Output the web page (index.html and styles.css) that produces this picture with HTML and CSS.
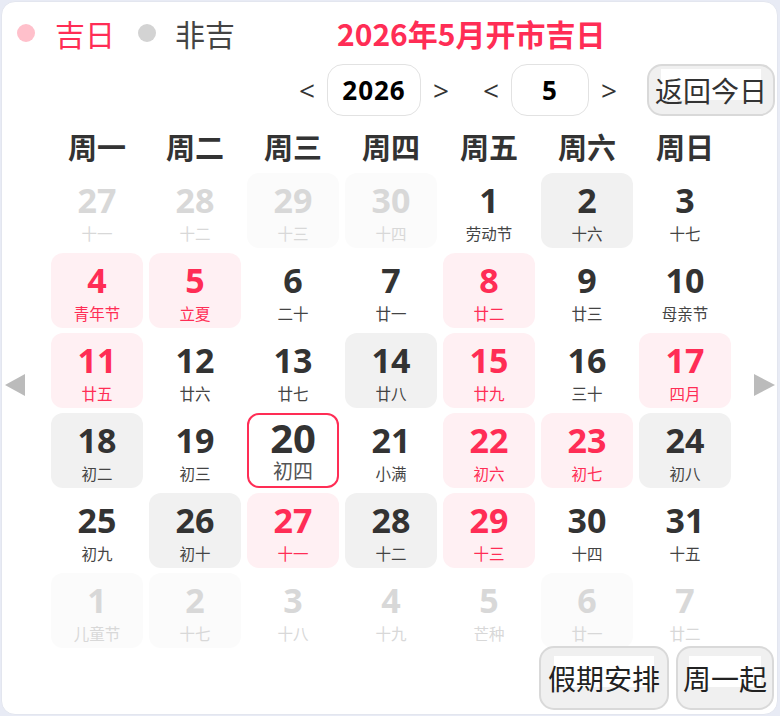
FILE: index.html
```html
<!DOCTYPE html>
<html lang="zh-CN">
<head>
<meta charset="utf-8">
<title>2026年5月开市吉日</title>
<link rel="stylesheet" href="styles.css">
</head>
<body>
<div class="card">
  <div class="top">
    <span class="dot dot-good"></span><span class="legend legend-good">吉日</span>
    <span class="dot dot-bad"></span><span class="legend legend-bad">非吉</span>
    <span class="title">2026年5月开市吉日</span>
  </div>
  <div class="controls">
    <span class="arr">&lt;</span>
    <span class="box box-year">2026</span>
    <span class="arr">&gt;</span>
    <span class="arr arr-gap">&lt;</span>
    <span class="box box-month">5</span>
    <span class="arr">&gt;</span>
    <button class="btn btn-today"><span class="hl">返回今日</span></button>
  </div>
  <div class="weekdays">
    <span>周一</span><span>周二</span><span>周三</span><span>周四</span><span>周五</span><span>周六</span><span>周日</span>
  </div>
  <div class="main">
    <div class="side side-left"><span class="tri tri-left"></span></div>
    <div class="grid">
      <div class="cell other"><b>27</b><i>十一</i></div>
      <div class="cell other"><b>28</b><i>十二</i></div>
      <div class="cell other faint"><b>29</b><i>十三</i></div>
      <div class="cell other faint"><b>30</b><i>十四</i></div>
      <div class="cell"><b>1</b><i>劳动节</i></div>
      <div class="cell bad"><b>2</b><i>十六</i></div>
      <div class="cell"><b>3</b><i>十七</i></div>

      <div class="cell good"><b>4</b><i>青年节</i></div>
      <div class="cell good"><b>5</b><i>立夏</i></div>
      <div class="cell"><b>6</b><i>二十</i></div>
      <div class="cell"><b>7</b><i>廿一</i></div>
      <div class="cell good"><b>8</b><i>廿二</i></div>
      <div class="cell"><b>9</b><i>廿三</i></div>
      <div class="cell"><b>10</b><i>母亲节</i></div>

      <div class="cell good"><b>11</b><i>廿五</i></div>
      <div class="cell"><b>12</b><i>廿六</i></div>
      <div class="cell"><b>13</b><i>廿七</i></div>
      <div class="cell bad"><b>14</b><i>廿八</i></div>
      <div class="cell good"><b>15</b><i>廿九</i></div>
      <div class="cell"><b>16</b><i>三十</i></div>
      <div class="cell good"><b>17</b><i>四月</i></div>

      <div class="cell bad"><b>18</b><i>初二</i></div>
      <div class="cell"><b>19</b><i>初三</i></div>
      <div class="cell today"><b>20</b><i>初四</i></div>
      <div class="cell"><b>21</b><i>小满</i></div>
      <div class="cell good"><b>22</b><i>初六</i></div>
      <div class="cell good"><b>23</b><i>初七</i></div>
      <div class="cell bad"><b>24</b><i>初八</i></div>

      <div class="cell"><b>25</b><i>初九</i></div>
      <div class="cell bad"><b>26</b><i>初十</i></div>
      <div class="cell good"><b>27</b><i>十一</i></div>
      <div class="cell bad"><b>28</b><i>十二</i></div>
      <div class="cell good"><b>29</b><i>十三</i></div>
      <div class="cell"><b>30</b><i>十四</i></div>
      <div class="cell"><b>31</b><i>十五</i></div>

      <div class="cell other faint"><b>1</b><i>儿童节</i></div>
      <div class="cell other faint"><b>2</b><i>十七</i></div>
      <div class="cell other"><b>3</b><i>十八</i></div>
      <div class="cell other"><b>4</b><i>十九</i></div>
      <div class="cell other"><b>5</b><i>芒种</i></div>
      <div class="cell other faint"><b>6</b><i>廿一</i></div>
      <div class="cell other"><b>7</b><i>廿二</i></div>
    </div>
    <div class="side side-right"><span class="tri tri-right"></span></div>
  </div>
  <div class="bottom">
    <button class="btn btn-holiday"><span class="hl">假期安排</span></button>
    <button class="btn btn-week"><span class="hl">周一起</span></button>
  </div>
</div>
</body>
</html>
```
FILE: styles.css
```css
* { box-sizing: border-box; }
html, body { margin: 0; padding: 0; }
body {
  background: #e8ebf5;
  width: 780px;
  height: 716px;
  overflow: hidden;
  font-family: "Noto Sans CJK SC", "Noto Sans", sans-serif;
}
.card {
  position: relative;
  margin: 1px;
  width: 777px;
  height: 714px;
  background: #fff;
  border: 1px solid #e3e6ef;
  border-radius: 14px;
  z-index: 0;
}
.top {
  display: flex;
  align-items: center;
  height: 62px;
  padding-left: 15px;
}
.dot {
  width: 18px;
  height: 18px;
  border-radius: 50%;
  display: inline-block;
}
.dot-good { background: #ffc0cb; margin-right: 20px; }
.dot-bad { background: #d3d3d3; margin-left: 23px; margin-right: 19px; }
.legend { font-size: 30px; line-height: 40px; }
.legend-good { color: #ff2d55; }
.legend-bad { color: #444; }
.title {
  margin-left: 102px;
  font-size: 30px;
  line-height: 40px;
  font-weight: 700;
  color: #ff2d55;
}
.controls {
  display: flex;
  align-items: center;
  justify-content: flex-end;
  height: 52px;
  padding-right: 2px;
}
.arr {
  width: 20px;
  text-align: center;
  font-family: "Open Sans", sans-serif;
  font-size: 28px;
  line-height: 36px;
  color: #333;
  margin: 0 10px;
}
.arr-gap { margin-left: 20px; }
.box {
  height: 52px;
  border: 1px solid #e2e2e2;
  border-radius: 16px;
  display: flex;
  align-items: center;
  justify-content: center;
  font-family: "Open Sans", sans-serif;
  font-weight: 700;
  font-size: 26px;
  color: #000;
  letter-spacing: 1px;
}
.box-year { width: 94px; }
.box-month { width: 78px; }
.btn {
  position: relative;
  z-index: 0;
  background: #f0f0f0;
  border: 2px solid #d9d9d9;
  border-radius: 15px;
  font-family: "Noto Sans CJK SC", sans-serif;
  font-size: 28px;
  color: #222;
  padding: 0;
  display: flex;
  align-items: center;
  justify-content: center;
}
.btn-today { width: 128px; height: 52px; margin-left: 18px; color: #333; }
.hl {
  position: relative;
  display: inline-block;
  line-height: 36px;
}
.hl::before {
  content: "";
  position: absolute;
  left: 6px;
  right: 6px;
  top: -3px;
  height: 31px;
  background: #fff;
  z-index: -1;
}
.weekdays {
  display: grid;
  grid-template-columns: repeat(7, 92px);
  column-gap: 6px;
  margin-left: 49px;
  height: 57px;
  padding-top: 12px;
}
.weekdays span {
  text-align: center;
  font-size: 29px;
  line-height: 36px;
  font-weight: 700;
  color: #333;
}
.main {
  display: flex;
}
.side { width: 49px; }
.side-right { width: 45px; padding-left: 23px; }
.side-left { padding-left: 3px; }
.tri {
  display: block;
  width: 0;
  height: 0;
  margin-top: 201px;
  border-top: 11.5px solid transparent;
  border-bottom: 11.5px solid transparent;
}
.tri-left { border-right: 20px solid #bbbbbb; }
.tri-right { border-left: 21px solid #bbbbbb; }
.grid {
  display: grid;
  grid-template-columns: repeat(7, 92px);
  grid-auto-rows: 75px;
  column-gap: 6px;
  row-gap: 5px;
}
.cell {
  border-radius: 12px;
  display: flex;
  flex-direction: column;
  align-items: center;
  padding-top: 10px;
}
.cell b {
  font-family: "Open Sans", sans-serif;
  font-weight: 700;
  font-size: 34px;
  line-height: 34px;
  color: #333;
}
.cell i {
  font-style: normal;
  font-size: 15.5px;
  line-height: 20px;
  margin-top: 6px;
  color: #444;
}
.cell.good { background: #fff0f3; }
.cell.good b, .cell.good i { color: #ff2d55; }
.cell.bad { background: #f1f1f1; }
.cell.other b, .cell.other i { color: #d8d8d8; }
.cell.faint { background: #fbfbfb; }
.cell.today {
  background: #fff;
  border: 2px solid #ff2d55;
  padding-top: 3px;
}
.cell.today b { font-size: 40px; line-height: 40px; }
.cell.today i { font-size: 20px; line-height: 24px; margin-top: 1px; color: #555; }
.bottom {
  display: flex;
  justify-content: flex-end;
  gap: 7px;
  margin-top: -2px;
  padding-right: 3px;
}
.btn-holiday { width: 130px; height: 64px; }
.btn-week { width: 98px; height: 64px; }
.bottom .hl { line-height: 44px; }
.bottom .hl::before { top: 0; }
```
